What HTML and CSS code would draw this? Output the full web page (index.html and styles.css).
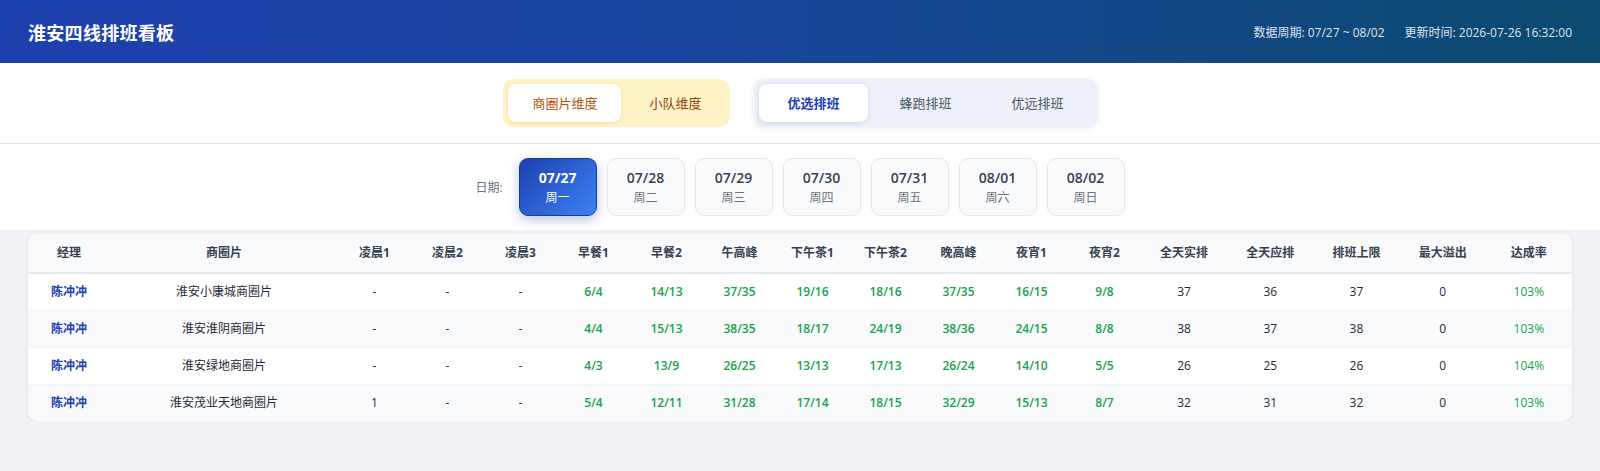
FILE: index.html
```html
<!DOCTYPE html>
<html lang="zh-CN">
<head>
    <meta charset="UTF-8">
    <meta name="viewport" content="width=device-width, initial-scale=1.0">
    <title>淮安四线排班看板</title>
    <link rel="stylesheet" href="styles.css">
</head>
<body>
    <header class="topbar">
        <h1>淮安四线排班看板</h1>
        <div class="meta">
            <span>数据周期: 07/27 ~ 08/02</span>
            <span>更新时间: 2026-07-26 16:32:00</span>
        </div>
    </header>

    <div class="toolbar">
        <div class="seg seg-dim">
            <button class="seg-btn active">商圈片维度</button>
            <button class="seg-btn">小队维度</button>
        </div>
        <div class="seg seg-plan">
            <button class="seg-btn active">优选排班</button>
            <button class="seg-btn">蜂跑排班</button>
            <button class="seg-btn">优远排班</button>
        </div>
    </div>

    <div class="date-bar">
        <span class="date-label">日期:</span>
        <div class="date-list" id="date-list"></div>
    </div>

    <main class="content">
        <div class="table-card">
            <table class="sched">
                <colgroup>
                    <col class="c-mgr">
                    <col class="c-area">
                    <col class="c-slot"><col class="c-slot"><col class="c-slot">
                    <col class="c-slot"><col class="c-slot"><col class="c-slot">
                    <col class="c-slot"><col class="c-slot"><col class="c-slot">
                    <col class="c-slot"><col class="c-slot">
                    <col><col><col><col><col>
                </colgroup>
                <thead>
                    <tr>
                        <th>经理</th>
                        <th>商圈片</th>
                        <th>凌晨1</th>
                        <th>凌晨2</th>
                        <th>凌晨3</th>
                        <th>早餐1</th>
                        <th>早餐2</th>
                        <th>午高峰</th>
                        <th>下午茶1</th>
                        <th>下午茶2</th>
                        <th>晚高峰</th>
                        <th>夜宵1</th>
                        <th>夜宵2</th>
                        <th>全天实排</th>
                        <th>全天应排</th>
                        <th>排班上限</th>
                        <th>最大溢出</th>
                        <th>达成率</th>
                    </tr>
                </thead>
                <tbody id="sched-body"></tbody>
            </table>
        </div>
    </main>

    <script>
        const dates = [
            ['07/27', '周一'], ['07/28', '周二'], ['07/29', '周三'], ['07/30', '周四'],
            ['07/31', '周五'], ['08/01', '周六'], ['08/02', '周日']
        ];

        const rows = [
            ['陈冲冲', '淮安小康城商圈片', '-', '-', '-', '6/4', '14/13', '37/35', '19/16', '18/16', '37/35', '16/15', '9/8', '37', '36', '37', '0', '103%'],
            ['陈冲冲', '淮安淮阴商圈片', '-', '-', '-', '4/4', '15/13', '38/35', '18/17', '24/19', '38/36', '24/15', '8/8', '38', '37', '38', '0', '103%'],
            ['陈冲冲', '淮安绿地商圈片', '-', '-', '-', '4/3', '13/9', '26/25', '13/13', '17/13', '26/24', '14/10', '5/5', '26', '25', '26', '0', '104%'],
            ['陈冲冲', '淮安茂业天地商圈片', '1', '-', '-', '5/4', '12/11', '31/28', '17/14', '18/15', '32/29', '15/13', '8/7', '32', '31', '32', '0', '103%']
        ];

        // Date picker cards
        const dateList = document.getElementById('date-list');
        dates.forEach(([day, week], i) => {
            const card = document.createElement('div');
            card.className = 'date-card' + (i === 0 ? ' active' : '');
            card.innerHTML = `<div class="d-day">${day}</div><div class="d-week">${week}</div>`;
            dateList.appendChild(card);
        });

        // Pick a cell class from its value
        function cellClass(value, col) {
            if (col === 0) return 'mgr';
            if (col === 1) return 'area';
            if (value.endsWith('%')) return 'rate';
            if (value.includes('/')) {
                const [got, need] = value.split('/').map(Number);
                return got >= need ? 'ok' : 'short';
            }
            return 'num';
        }

        const body = document.getElementById('sched-body');
        rows.forEach(row => {
            const tr = document.createElement('tr');
            row.forEach((value, col) => {
                const td = document.createElement('td');
                td.className = cellClass(value, col);
                td.textContent = value;
                tr.appendChild(td);
            });
            body.appendChild(tr);
        });
    </script>
</body>
</html>
```

FILE: styles.css
```css
:root {
    --blue: #1e40af;
    --blue-light: #3b82f6;
    --green: #16a34a;
    --text: #1f2937;
    --muted: #6b7280;
    --border: #e5e7eb;
    --page-bg: #f0f2f5;
}

* {
    margin: 0;
    padding: 0;
    box-sizing: border-box;
}

body {
    font-family: "Open Sans", "Noto Sans CJK SC", sans-serif;
    background-color: var(--page-bg);
    color: var(--text);
}

.topbar {
    height: 63px;
    padding: 0 28px;
    display: flex;
    align-items: center;
    justify-content: space-between;
    background: linear-gradient(90deg, #1e40af 0%, #1a45a0 40%, #0c4a6e 100%);
    color: white;
}

.topbar h1 {
    font-size: 18px;
    font-weight: 700;
    letter-spacing: 0.3px;
}

.meta {
    display: flex;
    gap: 20px;
    font-size: 12px;
    color: rgba(255, 255, 255, 0.88);
}

.toolbar {
    background: white;
    padding: 16px 28px;
    border-bottom: 1px solid var(--border);
    display: flex;
    justify-content: center;
    gap: 24px;
}

.seg {
    display: flex;
    gap: 4px;
    padding: 5px;
    border-radius: 10px;
}

.seg-btn {
    border: none;
    background: transparent;
    font-family: inherit;
    font-size: 13px;
    line-height: 18px;
    padding: 10px 24px;
    border-radius: 8px;
    cursor: pointer;
}

.seg-dim {
    background: #fef3c7;
}

.seg-dim .seg-btn {
    color: #92400e;
}

.seg-dim .seg-btn.active {
    background: white;
    color: #b45309;
    box-shadow: 0 1px 4px rgba(180, 83, 9, 0.15);
}

.seg-plan {
    background: #edf1f7;
    box-shadow: 0 1px 6px rgba(30, 64, 175, 0.12);
}

.seg-plan .seg-btn {
    padding: 10px 28px;
    color: #475569;
}

.seg-plan .seg-btn.active {
    background: white;
    color: var(--blue);
    font-weight: 700;
    box-shadow: 0 1px 5px rgba(30, 64, 175, 0.18);
}

.date-bar {
    background: white;
    padding: 14px 28px;
    display: flex;
    justify-content: center;
    align-items: center;
    gap: 16px;
}

.date-label {
    font-size: 12px;
    color: var(--muted);
}

.date-list {
    display: flex;
    gap: 10px;
}

.date-card {
    width: 78px;
    padding: 9px 0;
    text-align: center;
    background: #f8fafc;
    border: 1px solid #e2e8f0;
    border-radius: 9px;
    cursor: pointer;
}

.d-day {
    font-size: 14px;
    line-height: 20px;
    font-weight: 600;
    color: #374151;
}

.d-week {
    margin-top: 2px;
    font-size: 12px;
    line-height: 16px;
    color: var(--muted);
}

.date-card.active {
    background: linear-gradient(135deg, #1e40af, #3b82f6);
    border-color: #1e3a8a;
    box-shadow: 0 4px 12px rgba(30, 64, 175, 0.3);
}

.date-card.active .d-day,
.date-card.active .d-week {
    color: white;
}

.date-card.active .d-day {
    font-weight: 700;
}

.content {
    padding: 4px 28px 0;
}

.table-card {
    background: white;
    border-radius: 10px;
    box-shadow: 0 1px 4px rgba(0, 0, 0, 0.08);
    overflow: hidden;
}

.sched {
    width: 100%;
    border-collapse: collapse;
    table-layout: fixed;
    font-size: 12px;
}

.c-mgr { width: 82px; }
.c-area { width: 228px; }
.c-slot { width: 73px; }

.sched th {
    background: #f8fafc;
    color: #374151;
    font-weight: 700;
    line-height: 16px;
    padding: 11px 4px;
    border-bottom: 2px solid var(--border);
    white-space: nowrap;
}

.sched td {
    text-align: center;
    line-height: 16px;
    padding: 10px 4px;
    border-bottom: 1px solid #f1f5f9;
    color: var(--text);
    white-space: nowrap;
}

.sched tbody tr:nth-child(even) td {
    background: #f9fafb;
}

.sched tbody tr:last-child td {
    border-bottom: none;
}

.sched td.mgr {
    color: var(--blue);
    font-weight: 700;
}

.sched td.ok {
    color: var(--green);
    font-weight: 600;
}

.sched td.short {
    color: #dc2626;
    font-weight: 600;
}

.sched td.rate {
    color: var(--green);
}
```
